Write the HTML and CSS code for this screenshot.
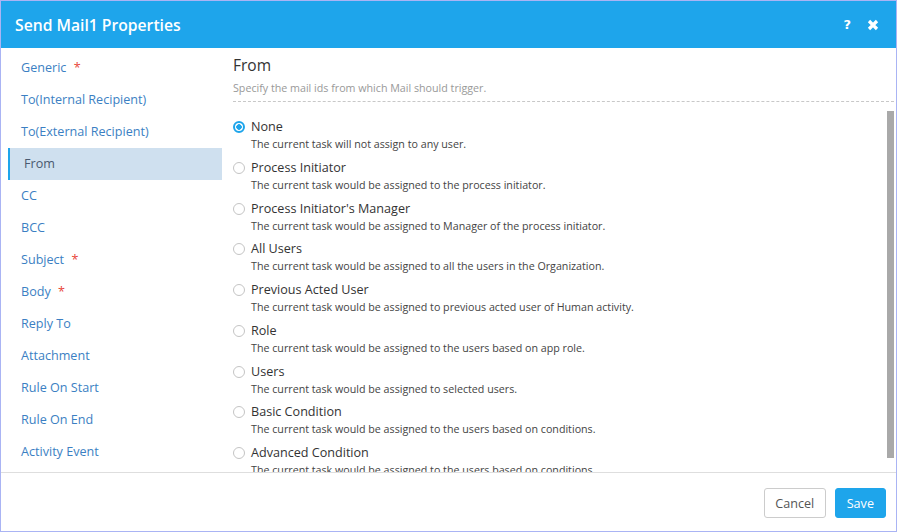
FILE: index.html
```html
<!DOCTYPE html>
<html lang="en">
<head>
    <meta charset="UTF-8">
    <meta name="viewport" content="width=device-width, initial-scale=1.0">
    <title>Send Mail1 Properties</title>
    <link rel="stylesheet" href="styles.css">
</head>
<body>
    <div class="dialog">
        <div class="dialog-header">
            <h1>Send Mail1 Properties</h1>
            <div class="header-actions">
                <span class="help-icon">?</span>
                <svg class="close-icon" viewBox="0 0 12 12" xmlns="http://www.w3.org/2000/svg">
                    <path d="M2 2L10 10M10 2L2 10"></path>
                </svg>
            </div>
        </div>

        <div class="dialog-body">
            <ul class="side-nav">
                <li>Generic <span class="required">*</span></li>
                <li>To(Internal Recipient)</li>
                <li>To(External Recipient)</li>
                <li class="active">From</li>
                <li>CC</li>
                <li>BCC</li>
                <li>Subject <span class="required">*</span></li>
                <li>Body <span class="required">*</span></li>
                <li>Reply To</li>
                <li>Attachment</li>
                <li>Rule On Start</li>
                <li>Rule On End</li>
                <li>Activity Event</li>
            </ul>

            <div class="panel">
                <div class="panel-head">
                    <h2>From</h2>
                    <p>Specify the mail ids from which Mail should trigger.</p>
                </div>
                <div class="scroll-box">
                    <div class="options">
                        <label class="option">
                            <span class="radio checked"></span>
                            <span class="option-text">
                                <span class="option-title">None</span>
                                <span class="option-desc">The current task will not assign to any user.</span>
                            </span>
                        </label>
                        <label class="option">
                            <span class="radio"></span>
                            <span class="option-text">
                                <span class="option-title">Process Initiator</span>
                                <span class="option-desc">The current task would be assigned to the process initiator.</span>
                            </span>
                        </label>
                        <label class="option">
                            <span class="radio"></span>
                            <span class="option-text">
                                <span class="option-title">Process Initiator's Manager</span>
                                <span class="option-desc">The current task would be assigned to Manager of the process initiator.</span>
                            </span>
                        </label>
                        <label class="option">
                            <span class="radio"></span>
                            <span class="option-text">
                                <span class="option-title">All Users</span>
                                <span class="option-desc">The current task would be assigned to all the users in the Organization.</span>
                            </span>
                        </label>
                        <label class="option">
                            <span class="radio"></span>
                            <span class="option-text">
                                <span class="option-title">Previous Acted User</span>
                                <span class="option-desc">The current task would be assigned to previous acted user of Human activity.</span>
                            </span>
                        </label>
                        <label class="option">
                            <span class="radio"></span>
                            <span class="option-text">
                                <span class="option-title">Role</span>
                                <span class="option-desc">The current task would be assigned to the users based on app role.</span>
                            </span>
                        </label>
                        <label class="option">
                            <span class="radio"></span>
                            <span class="option-text">
                                <span class="option-title">Users</span>
                                <span class="option-desc">The current task would be assigned to selected users.</span>
                            </span>
                        </label>
                        <label class="option">
                            <span class="radio"></span>
                            <span class="option-text">
                                <span class="option-title">Basic Condition</span>
                                <span class="option-desc">The current task would be assigned to the users based on conditions.</span>
                            </span>
                        </label>
                        <label class="option">
                            <span class="radio"></span>
                            <span class="option-text">
                                <span class="option-title">Advanced Condition</span>
                                <span class="option-desc">The current task would be assigned to the users based on conditions.</span>
                            </span>
                        </label>
                    </div>
                    <div class="scroll-thumb"></div>
                </div>
            </div>
        </div>

        <div class="dialog-footer">
            <button class="btn btn-cancel">Cancel</button>
            <button class="btn btn-save">Save</button>
        </div>
    </div>
</body>
</html>
```

FILE: styles.css
```css
* {
    margin: 0;
    padding: 0;
    box-sizing: border-box;
}

body {
    font-family: 'Open Sans', 'Noto Sans', sans-serif;
    background-color: #fff;
}

.dialog {
    width: 897px;
    height: 532px;
    border: 1px solid #aab4f4;
    display: flex;
    flex-direction: column;
    background-color: #fff;
}

.dialog-header {
    height: 47px;
    background-color: #1ea5eb;
    color: #fff;
    display: flex;
    align-items: center;
    justify-content: space-between;
    padding: 0 17px 0 14px;
}

.dialog-header h1 {
    font-size: 15.7px;
    font-weight: 600;
}

.header-actions {
    display: flex;
    align-items: center;
    gap: 16px;
}

.help-icon {
    font-family: 'DejaVu Sans', sans-serif;
    font-size: 13px;
    font-weight: bold;
}

.close-icon {
    width: 12px;
    height: 12px;
    stroke: #fff;
    stroke-width: 3.2;
    fill: none;
}

.dialog-body {
    flex: 1;
    display: flex;
    min-height: 0;
    border-bottom: 1px solid #dedede;
}

.side-nav {
    list-style: none;
    width: 221px;
    padding: 4px 0 0 7px;
}

.side-nav li {
    height: 32px;
    line-height: 32px;
    padding-left: 13px;
    font-size: 12.6px;
    color: #3b7fc3;
}

.side-nav li.active {
    background-color: #cfe0ef;
    border-left: 2px solid #1ea5eb;
    padding-left: 14px;
    color: #4a5a70;
}

.required {
    color: #e8463a;
    margin-left: 4px;
}

.panel {
    flex: 1;
    display: flex;
    flex-direction: column;
    padding: 6px 2px 0 11px;
    min-width: 0;
}

.panel-head {
    border-bottom: 1px dashed #c8c8c8;
    padding-bottom: 5px;
}

.panel-head h2 {
    font-size: 15.5px;
    font-weight: normal;
    color: #333;
    line-height: 22px;
}

.panel-head p {
    font-size: 10.7px;
    color: #999;
    line-height: 16px;
    margin-top: 4px;
}

.scroll-box {
    flex: 1;
    position: relative;
    min-height: 0;
    margin-top: 9px;
}

.options {
    height: 100%;
    overflow: hidden;
    padding-top: 6px;
}

.scroll-thumb {
    position: absolute;
    top: 0;
    right: 0;
    width: 7px;
    height: 347px;
    background-color: #a9a9a9;
}

.option {
    display: flex;
    align-items: flex-start;
    gap: 6px;
    margin-bottom: 5.75px;
}

.radio {
    width: 12px;
    height: 12px;
    margin-top: 4px;
    border: 1px solid #c4c4c4;
    border-radius: 50%;
    flex-shrink: 0;
}

.radio.checked {
    border: 2px solid #1ea5eb;
    background: radial-gradient(circle, #1ea5eb 0 2.5px, #fff 3px);
}

.option-text {
    display: flex;
    flex-direction: column;
}

.option-title {
    font-size: 12.6px;
    color: #333;
    line-height: 19px;
}

.option-desc {
    font-size: 10.7px;
    color: #444;
    line-height: 16px;
}

.dialog-footer {
    height: 58px;
    display: flex;
    justify-content: flex-end;
    align-items: flex-start;
    gap: 9px;
    padding: 15px 10px 0 0;
}

.btn {
    height: 30px;
    font-family: 'Open Sans', sans-serif;
    font-size: 12.6px;
    border-radius: 3px;
    padding: 0 11px;
    cursor: pointer;
}

.btn-cancel {
    background-color: #fff;
    border: 1px solid #ccc;
    color: #555;
    padding: 0 10.5px;
}

.btn-save {
    background-color: #1ea5eb;
    border: 1px solid #1ea5eb;
    color: #fff;
}
```
